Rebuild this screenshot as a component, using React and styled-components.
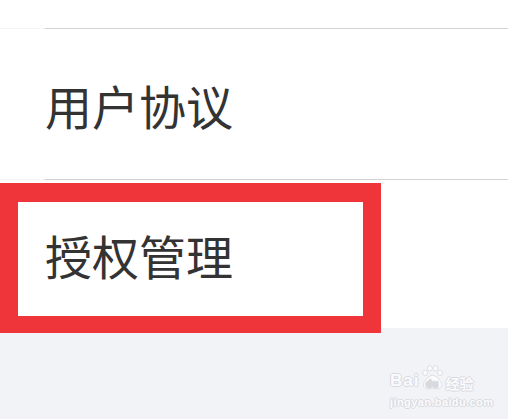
import React from 'react'
import styled, { createGlobalStyle } from 'styled-components'

const GlobalStyle = createGlobalStyle`
    html, body {
        margin: 0;
        padding: 0;
        background: #f2f3f7;
    }
    body {
        font-family: "Noto Sans CJK SC", "Noto Sans", sans-serif;
    }
`

function App() {
    return (
        <>
            <GlobalStyle />
            <Page>
                <List>
                    <Row>
                        <Cell height={28} />
                    </Row>
                    <Row>
                        <Cell height={150}>
                            <Label>用户协议</Label>
                        </Cell>
                    </Row>
                    <Row>
                        <Cell height={149} last>
                            <Label>授权管理</Label>
                        </Cell>
                    </Row>
                </List>
                {/* red annotation box drawn over the screenshot */}
                <Highlight />
                <Watermark>
                    <LogoLine>
                        <span>Bai</span>
                        <Paw viewBox="0 0 24 24">
                            <ellipse cx="5" cy="7.5" rx="2.3" ry="2.6" />
                            <ellipse cx="9.5" cy="3.2" rx="2.3" ry="2.6" />
                            <ellipse cx="14.8" cy="3.2" rx="2.3" ry="2.6" />
                            <ellipse cx="19.2" cy="7.5" rx="2.3" ry="2.6" />
                            <path d="M12 10 C8 10 6.5 13 4.5 15.5 C2.5 18 2.5 23 7.5 23 C9.5 23 10.5 22.3 12 22.3 C13.5 22.3 14.5 23 16.5 23 C21.5 23 21.5 18 19.5 15.5 C17.5 13 16 10 12 10 Z" />
                            <text x="12" y="21" textAnchor="middle" fontSize="8.5" fontWeight="700" fill="#f4f5f8" stroke="#d6d7dc" strokeWidth="0.4">du</text>
                        </Paw>
                        <Jing>经验</Jing>
                    </LogoLine>
                    <Url>jingyan.baidu.com</Url>
                </Watermark>
            </Page>
        </>
    )
}

export default App

const Page = styled.div`
    position: relative;
    width: 508px;
    height: 419px;
    overflow: hidden;
    background: #f2f3f7;
`

const List = styled.div`
    background: #fff;
    display: flex;
    flex-direction: column;
`

const Row = styled.div`
    padding-left: 45px;
    border-bottom: 1px solid #f4f4f4;
    &:last-child {
        border-bottom: none;
    }
`

const Cell = styled.div`
    height: ${p => p.height}px;
    display: flex;
    align-items: center;
    border-bottom: ${p => (p.last ? 'none' : '1px solid #d2d2d4')};
    margin-bottom: -1px;
`

const Label = styled.div`
    font-size: 47px;
    line-height: 1;
    color: #333333;
`

const Highlight = styled.div`
    position: absolute;
    left: 0;
    top: 183px;
    width: 345px;
    height: 114px;
    border: 18px solid #ef3539;
    border-top-width: 19px;
    border-bottom-width: 17px;
    pointer-events: none;
`

const outline = `
    -1px 0 0 #d9dadf, 1px 0 0 #d9dadf, 0 -1px 0 #d9dadf, 0 1px 0 #d9dadf
`

const Watermark = styled.div`
    position: absolute;
    left: 390px;
    top: 365px;
    display: flex;
    flex-direction: column;
    align-items: flex-start;
    color: #fbfbfd;
    font-family: "Liberation Sans", Arial, sans-serif;
    text-shadow: ${outline};
`

const LogoLine = styled.div`
    display: flex;
    align-items: flex-end;
    font-size: 17px;
    font-weight: 700;
    line-height: 1;
    letter-spacing: 1px;
`

const Paw = styled.svg`
    width: 25px;
    height: 25px;
    margin: 0 0 -1px 1px;
    fill: #fbfbfd;
    stroke: #d9dadf;
    stroke-width: 0.8;
`

const Jing = styled.span`
    font-family: "Noto Sans CJK SC", sans-serif;
    font-size: 14px;
    font-weight: 700;
    letter-spacing: 0;
    margin-bottom: -1px;
`

const Url = styled.div`
    margin-top: 8px;
    font-size: 11px;
    font-weight: 700;
    line-height: 1;
    letter-spacing: 0.4px;
`
